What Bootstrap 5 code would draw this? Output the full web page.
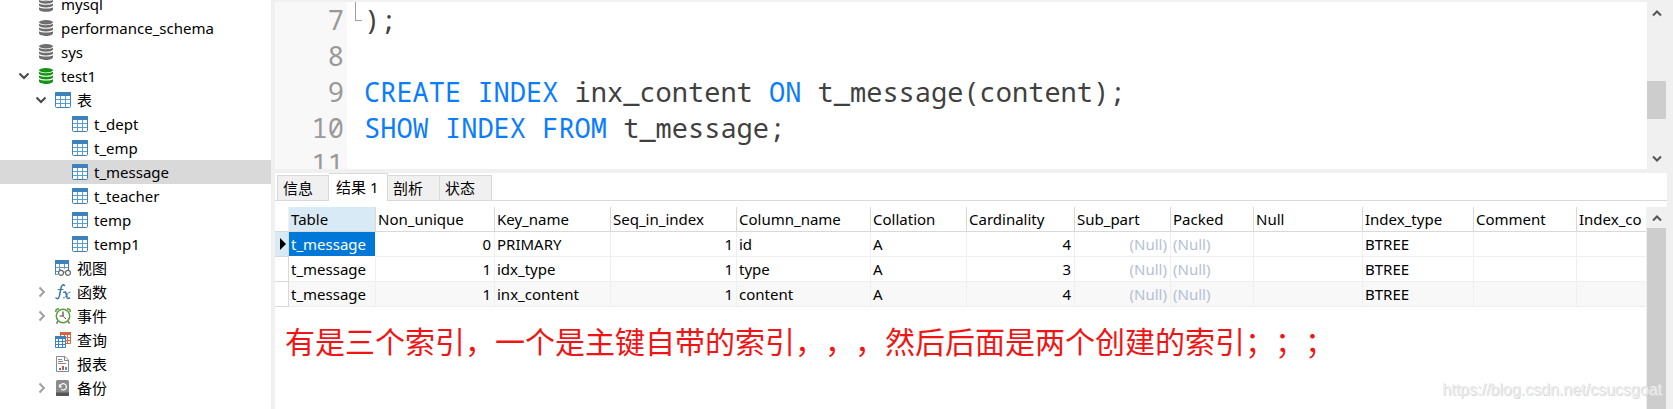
<!DOCTYPE html>
<html lang="zh-CN">
<head>
<meta charset="utf-8">
<meta name="viewport" content="width=device-width, initial-scale=1">
<title>test1 - t_message</title>
<link href="https://cdn.jsdelivr.net/npm/bootstrap@5.3.0/dist/css/bootstrap.min.css" rel="stylesheet">
<style>
  :root { --chrome: #f0f0f0; --line: #d9d9d9; --grid: #efefef; --thumb: #cdcdcd; --pick: #0078d7; }
  body { background: var(--chrome); color: #000; font: 15px/24px "Noto Sans", "Noto Sans CJK SC", sans-serif; }
  svg { display: block; flex: none; }

  /* object tree */
  .tree-pane { width: 271px; }
  .tree-list { margin-top: -8px; }
  .tree-row { height: 24px; gap: 6px; padding-left: 39px; white-space: nowrap; }
  .tree-row.level-2 { padding-left: 55px; }
  .tree-row.level-3 { padding-left: 72px; }
  .tree-row.with-arrow { padding-left: 18px; }
  .tree-row.level-2.with-arrow { padding-left: 35px; }
  .tree-row.picked { background: #d9d9d9; }
  .db-icon { color: #6e6e6e; }
  .db-icon.open { color: #149414; }

  /* SQL editor */
  .work-pane { padding: 2px 0 0 4px; }
  .editor { height: 167px; margin-bottom: 4px; }
  .code-area { background: #fff; }
  .code-lines { font: 27px/36px "Noto Sans Mono", "DejaVu Sans Mono", monospace; color: #404040; }
  .code-lines .gutter { width: 72px; padding-right: 3px; background: #f8f8f8; color: #999; }
  .code-lines .source { padding-left: 17px; white-space: pre; }
  .code-lines .kw { color: #0a7cff; }
  .fold-end { left: 80px; top: 0; width: 7px; height: 19px; border: solid #a0a0a0; border-width: 0 0 1px 1px; }

  /* scroll bars */
  .scroller { width: 19px; margin-right: 7px; background: var(--chrome); }
  .scroller .arrow { height: 21px; }
  .scroller .thumb { background: var(--thumb); }

  /* result tabs */
  .result-tabs { height: 34px; margin-right: 6px; padding-left: 2px; background: #fff; }
  .tab-strip { height: 28px; border-bottom: 1px solid var(--line); margin-left: -2px; padding-left: 2px; }
  .tab-strip button { border: 1px solid var(--line); border-bottom: 0; border-left: 0; background: var(--chrome); width: 52px; height: 25px; padding: 0 0 0 5px; text-align: left; color: #000; line-height: 24px; }
  .tab-strip button:first-child { border-left: 1px solid var(--line); }
  .tab-strip button.current { background: #fff; width: 59px; height: 28px; margin-bottom: -1px; padding: 0 0 2px 7px; }

  /* result grid */
  .result-body { background: #fff; margin-right: 1px; }
  .grid { table-layout: fixed; width: 100%; border-collapse: separate; border-spacing: 0; line-height: 24px; }
  .grid th, .grid td { height: 25px; padding: 0 3px 0 2px; border-right: 1px solid var(--grid); border-bottom: 1px solid var(--grid); font-weight: 400; white-space: nowrap; overflow: hidden; }
  .grid thead th { border-color: var(--line); }
  .grid tr > :last-child { border-right: 0; }
  .grid .marker { padding: 0 0 0 5px; border-color: var(--line); background: #fff; }
  .grid thead .marker { border-right-color: var(--chrome); }
  .grid .num { text-align: right; }
  .grid .nil { color: #b4bfd5; }
  .grid .soft-blue { background: #d9eaf7; }
  .grid .cell-picked { background: var(--pick); color: #fff; border-color: #fff; }
  .grid tr.alt td { background: #f8f8f8; }

  .note { color: #f01414; font-size: 30px; line-height: 44px; padding: 11px 0 0 10px; font-family: "Noto Sans CJK SC", sans-serif; text-spacing-trim: space-all; font-feature-settings: "chws" 0; }
  .site-mark { right: 11px; bottom: 7px; font: 16px/24px "Liberation Sans", sans-serif; color: #ececec; text-shadow: 1px 1px 0 #dadada; }
</style>
<script src="https://cdn.jsdelivr.net/npm/bootstrap@5.3.0/dist/js/bootstrap.bundle.min.js"></script>
</head>
<body class="vh-100 d-flex overflow-hidden position-relative">

<svg width="0" height="0" class="position-absolute" aria-hidden="true">
  <symbol id="db" viewBox="0 0 14 16">
    <g fill="currentColor">
      <ellipse cx="7" cy="2.2" rx="7" ry="2.2"/>
      <path d="M0 3.8c1.5 1.8 12.500 1.800 14 0v1.900c-1 2.600-13 2.600-14 0z"/>
      <path d="M0 7.400c1.500 1.800 12.500 1.800 14 0v2.100c-1 2.600-13 2.600-14 0z"/>
      <path d="M0 11.200c1.500 1.800 12.500 1.800 14 0v2.200c-1 3.300-13 3.300-14 0z"/>
    </g>
  </symbol>
  <symbol id="tbl" viewBox="0 0 16 16">
    <rect x=".5" y=".5" width="15" height="15" rx="1" fill="#fff" stroke="#3c82bd"/>
    <path d="M0 4V1q0-1 1-1h14q1 0 1 1v3z" fill="#3c82bd"/>
    <path d="M5.500 4v11M10.500 4v11M1 7.500h14M1 11.500h14" stroke="#5a9fd4" fill="none"/>
  </symbol>
  <symbol id="down" viewBox="0 0 12 12"><path d="M1.500 3.500L6 8l4.500-4.500" fill="none" stroke="#484848" stroke-width="2"/></symbol>
  <symbol id="next" viewBox="0 0 12 12"><path d="M4.500 1.500L9 6l-4.500 4.500" fill="none" stroke="#a0a0a0" stroke-width="2"/></symbol>
  <symbol id="sb-up" viewBox="0 0 10 8"><path d="M1 6.500l4-4 4 4" fill="none" stroke="#555" stroke-width="2"/></symbol>
  <symbol id="sb-down" viewBox="0 0 10 8"><path d="M1 1.500l4 4 4-4" fill="none" stroke="#555" stroke-width="2"/></symbol>
</svg>

<aside class="tree-pane bg-white flex-shrink-0 overflow-hidden" aria-label="对象">
  <ul class="tree-list list-unstyled mb-0">
    <li class="tree-row d-flex align-items-center"><svg class="db-icon" width="16" height="16"><use href="#db" width="14"/></svg>mysql</li>
    <li class="tree-row d-flex align-items-center"><svg class="db-icon" width="16" height="16"><use href="#db" width="14"/></svg>performance_schema</li>
    <li class="tree-row d-flex align-items-center"><svg class="db-icon" width="16" height="16"><use href="#db" width="14"/></svg>sys</li>
    <li class="tree-row with-arrow d-flex align-items-center"><svg width="15" height="12"><use href="#down" width="12"/></svg><svg class="db-icon open" width="16" height="16"><use href="#db" width="14"/></svg>test1</li>
    <li class="tree-row level-2 with-arrow d-flex align-items-center"><svg width="14" height="12"><use href="#down" width="12"/></svg><svg width="16" height="16"><use href="#tbl"/></svg>表</li>
    <li class="tree-row level-3 d-flex align-items-center"><svg width="16" height="16"><use href="#tbl"/></svg>t_dept</li>
    <li class="tree-row level-3 d-flex align-items-center"><svg width="16" height="16"><use href="#tbl"/></svg>t_emp</li>
    <li class="tree-row level-3 picked d-flex align-items-center"><svg width="16" height="16"><use href="#tbl"/></svg>t_message</li>
    <li class="tree-row level-3 d-flex align-items-center"><svg width="16" height="16"><use href="#tbl"/></svg>t_teacher</li>
    <li class="tree-row level-3 d-flex align-items-center"><svg width="16" height="16"><use href="#tbl"/></svg>temp</li>
    <li class="tree-row level-3 d-flex align-items-center"><svg width="16" height="16"><use href="#tbl"/></svg>temp1</li>
    <li class="tree-row level-2 d-flex align-items-center">
      <svg width="16" height="16" viewBox="0 0 16 16"><path d="M.5 14V1h13v8" fill="#fff" stroke="#3c82bd"/><path d="M0 0h14v4H0z" fill="#3c82bd"/><path d="M4.500 4v6M9.500 4v5M1 7.500h12M1 11.500h2M0 14.500h3" stroke="#5a9fd4"/><path d="M4.500 10l1-1M14 10l-1-1" stroke="#666"/><circle cx="6" cy="12.800" r="2.500" fill="#fff" stroke="#666" stroke-width="1.200"/><circle cx="13" cy="12.800" r="2.500" fill="#fff" stroke="#666" stroke-width="1.200"/><path d="M8.500 12.500q1-1 2 0" fill="none" stroke="#666"/></svg>视图</li>
    <li class="tree-row level-2 with-arrow d-flex align-items-center"><svg width="14" height="12"><use href="#next" width="12"/></svg>
      <svg width="16" height="16" viewBox="0 0 16 16" fill="none" stroke="#3878ac" stroke-linecap="round"><path d="M9.500 1.500C8-.1 6.500 1.500 6 4L4.500 11.500C4 14.500 2.500 15.300 1 14" stroke-width="1.500"/><path d="M3 5.500h5"/><path d="M8.800 8.200q1.700-.8 2.200 1l1 4q.5 1.800 2.500.8" stroke-width="1.600"/><path d="M15 8.200q-1.300-.3-2.500 1.600l-2 3q-1 1.500-2.200 1.200"/></svg>函数</li>
    <li class="tree-row level-2 with-arrow d-flex align-items-center"><svg width="14" height="12"><use href="#next" width="12"/></svg>
      <svg width="16" height="16" viewBox="0 0 16 16" fill="none"><path d="M.8 4Q.5.800 4 .8M12 .8q3.500 0 3.200 3.200" stroke="#5b9c3c" stroke-width="1.500"/><path d="M3 13l-1.500 2.500M13 13l1.500 2.500" stroke="#777" stroke-width="1.500"/><circle cx="8" cy="8" r="6.700" fill="#fff" stroke="#5b9c3c" stroke-width="1.500"/><path d="M8 3.500V8H4.500" stroke="#444" stroke-width="1.200"/><path d="M8 8l3 3" stroke="#e03c31"/></svg>事件</li>
    <li class="tree-row level-2 d-flex align-items-center">
      <svg width="16" height="16" viewBox="0 0 16 16"><path d="M5.500.5h10v11h-10z" fill="#fff" stroke="#d9623f"/><path d="M5 0h11v3H5z" fill="#d9623f"/><path d="M9.500 3v8M12.500 3v8M6 5.500h9M6 8.500h9" stroke="#d9623f"/><path d="M.5 4.500h10v11H.5z" fill="#fff" stroke="#3c82bd"/><path d="M0 4h11v3H0z" fill="#3c82bd"/><path d="M3.500 7v8M7.500 7v8M1 9.500h9M1 12.500h9" stroke="#3c82bd"/></svg>查询</li>
    <li class="tree-row level-2 d-flex align-items-center">
      <svg width="16" height="16" viewBox="0 0 16 16"><path d="M1.500.5h8.500l3.500 3.500v11.500h-12z" fill="#fff" stroke="#888"/><path d="M9.500.5v4h4M3 3.500h4M3 5.500h5M3 7.500h8" fill="none" stroke="#888"/><path d="M4 12h2v2H4z" fill="#3c82bd"/><path d="M7 10h2v4H7z" fill="#e0502f"/><path d="M10 11h2v3h-2z" fill="#4795dd"/></svg>报表</li>
    <li class="tree-row level-2 with-arrow d-flex align-items-center"><svg width="14" height="12"><use href="#next" width="12"/></svg>
      <svg width="16" height="16" viewBox="0 0 16 16"><rect x="1" width="13" height="16" rx="1.500" fill="#8b8b8b"/><path d="M1 12.500h13V15q0 1-1 1H2q-1 0-1-1z" fill="#555"/><path d="M4.500 4.500v2.500h2.500M5 6.500a3.200 3.200 0 1 1 1.200 2.800" fill="none" stroke="#fff" stroke-width="1.200"/></svg>备份</li>
  </ul>
</aside>

<main class="work-pane flex-grow-1 d-flex flex-column overflow-hidden">
  <section class="editor d-flex flex-shrink-0" aria-label="SQL">
    <div class="code-area flex-grow-1 overflow-hidden position-relative">
      <div class="code-lines d-flex">
        <div class="gutter text-end flex-shrink-0">7<br>8<br>9<br>10<br>11</div>
        <div class="source">);

<span class="kw">CREATE INDEX</span> inx_content <span class="kw">ON</span> t_message(content);
<span class="kw">SHOW INDEX FROM</span> t_message;</div>
      </div>
      <span class="fold-end position-absolute"></span>
    </div>
    <div class="scroller d-flex flex-column flex-shrink-0">
      <div class="arrow d-flex align-items-center justify-content-center"><svg width="10" height="8"><use href="#sb-up"/></svg></div>
      <div class="flex-grow-1 d-flex flex-column"><div style="height:46.400%"></div><div class="thumb" style="height:30.400%"></div></div>
      <div class="arrow d-flex align-items-center justify-content-center"><svg width="10" height="8"><use href="#sb-down"/></svg></div>
    </div>
  </section>

  <div class="result-tabs flex-shrink-0">
    <div class="tab-strip d-flex align-items-end" role="tablist">
      <button type="button" role="tab">信息</button>
      <button type="button" role="tab" class="current" aria-selected="true">结果 1</button>
      <button type="button" role="tab">剖析</button>
      <button type="button" role="tab">状态</button>
    </div>
  </div>

  <section class="flex-grow-1 d-flex overflow-hidden">
    <div class="result-body flex-grow-1 overflow-hidden">
      <table class="grid">
        <colgroup>
          <col style="width:14px"><col style="width:87px"><col style="width:119px"><col style="width:116px"><col style="width:126px"><col style="width:134px"><col style="width:96px"><col style="width:108px"><col style="width:96px"><col style="width:83px"><col style="width:109px"><col style="width:111px"><col style="width:103px"><col>
        </colgroup>
        <thead>
          <tr><th class="marker"></th><th class="soft-blue">Table</th><th>Non_unique</th><th>Key_name</th><th>Seq_in_index</th><th>Column_name</th><th>Collation</th><th>Cardinality</th><th>Sub_part</th><th>Packed</th><th>Null</th><th>Index_type</th><th>Comment</th><th>Index_co</th></tr>
        </thead>
        <tbody>
          <tr><td class="marker soft-blue"><svg width="6" height="12" viewBox="0 0 6 12"><path d="M0 0l6 6-6 6z"/></svg></td><td class="cell-picked">t_message</td><td class="num">0</td><td>PRIMARY</td><td class="num">1</td><td>id</td><td>A</td><td class="num">4</td><td class="num nil">(Null)</td><td class="nil">(Null)</td><td></td><td>BTREE</td><td></td><td></td></tr>
          <tr><td class="marker"></td><td>t_message</td><td class="num">1</td><td>idx_type</td><td class="num">1</td><td>type</td><td>A</td><td class="num">3</td><td class="num nil">(Null)</td><td class="nil">(Null)</td><td></td><td>BTREE</td><td></td><td></td></tr>
          <tr class="alt"><td class="marker bg-white"></td><td>t_message</td><td class="num">1</td><td>inx_content</td><td class="num">1</td><td>content</td><td>A</td><td class="num">4</td><td class="num nil">(Null)</td><td class="nil">(Null)</td><td></td><td>BTREE</td><td></td><td></td></tr>
        </tbody>
      </table>
      <p class="note mb-0 text-nowrap">有是三个索引，一个是主键自带的索引，，，然后后面是两个创建的索引；；；</p>
    </div>
    <div class="scroller d-flex flex-column flex-shrink-0">
      <div class="arrow d-flex align-items-center justify-content-center"><svg width="10" height="8"><use href="#sb-up"/></svg></div>
      <div class="thumb flex-grow-1"></div>
    </div>
  </section>
</main>

<div class="site-mark position-absolute">https://blog.csdn.net/csucsgoat</div>
</body>
</html>
